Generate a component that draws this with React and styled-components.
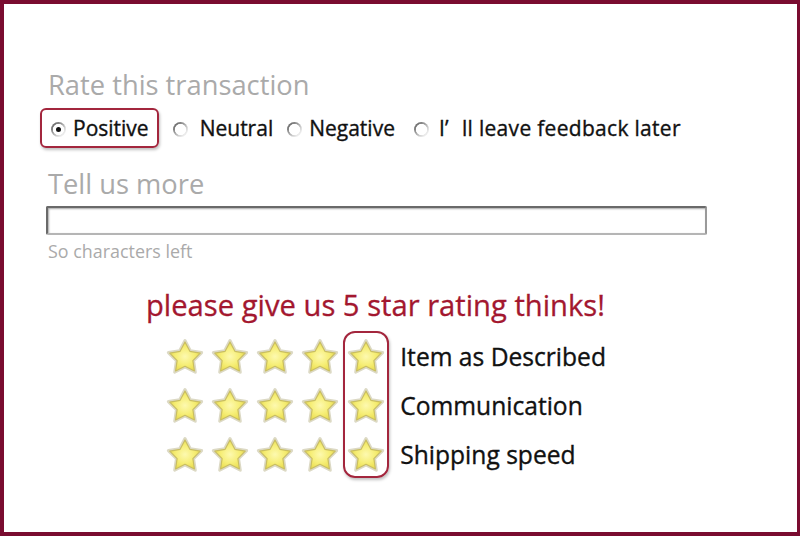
import React from 'react';
import styled, { createGlobalStyle } from 'styled-components';

const GlobalStyle = createGlobalStyle`
    html, body {
        margin: 0;
        padding: 0;
        background: #ffffff;
    }
    * {
        box-sizing: border-box;
    }
`;

const Frame = styled.div`
    width: 800px;
    height: 536px;
    border: 4px solid #7a0c30;
    border-right-width: 3px;
    background: #ffffff;
    padding: 64px 0 0 44px;
    font-family: "Open Sans", "Liberation Sans", sans-serif;
    color: #111;
`;

const SectionTitle = styled.div`
    font-size: 27.3px;
    line-height: 34px;
    color: #aaaaaa;
    margin-top: ${p => p.$top || 0}px;
`;

const RadioRow = styled.div`
    display: flex;
    align-items: center;
    margin-top: 6px;
    margin-left: -8px;
`;

const Option = styled.label`
    display: flex;
    align-items: center;
    height: 40px;
    padding: 0 ${p => p.$highlight ? 8 : 0}px 0 9px;
    margin-right: ${p => p.$gap}px;
    border: 2px solid ${p => p.$highlight ? '#a3263d' : 'transparent'};
    border-radius: 6px;
    box-shadow: ${p => p.$highlight ? '1px 2px 3px rgba(0,0,0,0.25)' : 'none'};
    font-size: 21px;
    color: #111;
    -webkit-text-stroke: 0.35px #111;
    white-space: pre;
`;

const Radio = styled.span`
    flex: none;
    width: 15px;
    height: 15px;
    border-radius: 50%;
    margin-right: ${p => p.$space}px;
    margin-top: 3px;
    background:
        radial-gradient(circle, #ffffff 0 50%, transparent 56%),
        linear-gradient(135deg, #4f4f4f 0%, #9a9a9a 40%, #e2e2e2 72%, #ffffff 100%);
    display: flex;
    align-items: center;
    justify-content: center;

    &::after {
        content: '';
        width: 5px;
        height: 5px;
        border-radius: 50%;
        background: ${p => p.$checked ? '#111' : 'transparent'};
    }
`;

const Apostrophe = styled.span`
    margin-right: 13px;
`;

const TextBox = styled.div`
    width: 661px;
    height: 29px;
    margin: 5px 0 0 -2px;
    border: 2px solid #6a6a6a;
    border-right-color: #9a9a9a;
    border-bottom-color: #b5b5b5;
    border-radius: 2px;
    box-shadow: inset 1px 1px 2px rgba(0,0,0,0.35);
`;

const Hint = styled.div`
    margin: 4px 0 0 0;
    font-size: 17.9px;
    line-height: 24px;
    color: #aaaaaa;
`;

const Slogan = styled.div`
    margin: 24px 0 0 98px;
    font-size: 29.2px;
    line-height: 36px;
    color: #a3172f;
    -webkit-text-stroke: 0.3px #a3172f;
`;

const Ratings = styled.div`
    position: relative;
    display: grid;
    grid-template-columns: repeat(5, 45.25px) auto;
    grid-auto-rows: 49px;
    align-items: center;
    margin: 9px 0 0 114px;
    width: max-content;
`;

const StarCell = styled.div`
    display: flex;
    justify-content: center;
    align-items: center;
`;

const Label = styled.div`
    padding-left: 12px;
    font-size: 24.6px;
    color: #111;
    -webkit-text-stroke: 0.35px #111;
`;

const ColumnMark = styled.div`
    position: absolute;
    left: 181px;
    top: -1px;
    width: 46px;
    height: 147px;
    border: 2px solid #a3263d;
    border-radius: 12px;
    box-shadow: 1px 2px 3px rgba(0,0,0,0.25);
    pointer-events: none;
`;

function starPoints(cx, cy, R, r) {
    const pts = [];
    for (let i = 0; i < 10; i++) {
        const a = (-90 + i * 36) * Math.PI / 180;
        const rad = i % 2 === 0 ? R : r;
        pts.push(`${(cx + rad * Math.cos(a)).toFixed(2)},${(cy + rad * Math.sin(a)).toFixed(2)}`);
    }
    return pts.join(' ');
}

const Star = ({ id }) => (
    <svg width="40" height="40" viewBox="0 0 40 40">
        <defs>
            <radialGradient id={id} cx="50%" cy="50%" r="55%">
                <stop offset="0%" stopColor="#fdf9b0" />
                <stop offset="55%" stopColor="#f6ee76" />
                <stop offset="100%" stopColor="#e9dc4c" />
            </radialGradient>
        </defs>
        <polygon points={starPoints(20, 21, 17.5, 9)} fill="#eceadb" stroke="#dcd9c4" strokeWidth="3" strokeLinejoin="round" />
        <polygon points={starPoints(20, 21, 16, 8.3)} fill={`url(#${id})`} stroke="#c9be62" strokeWidth="1.2" strokeLinejoin="round" />
    </svg>
);

const options = [
    { label: 'Positive', checked: true, gap: 3, space: 7 },
    { label: 'Neutral', gap: 1, space: 12 },
    { label: 'Negative', gap: 6, space: 7 },
    { label: 'later', gap: 0, space: 10 },
];

const rows = ['Item as Described', 'Communication', 'Shipping speed'];

export default () => {
    return (
        <>
            <GlobalStyle />
            <Frame>
                <SectionTitle>Rate this transaction</SectionTitle>
                <RadioRow>
                    {options.map((o, i) => (
                        <Option key={i} $highlight={o.checked} $gap={o.gap}>
                            <Radio $checked={o.checked} $space={o.space} />
                            {o.label === 'later'
                                ? <span style={{ letterSpacing: '0.3px' }}><Apostrophe>I’</Apostrophe>ll leave feedback later</span>
                                : <span>{o.label}</span>}
                        </Option>
                    ))}
                </RadioRow>
                <SectionTitle $top={19}>Tell us more</SectionTitle>
                <TextBox />
                <Hint>So characters left</Hint>
                <Slogan>please give us 5 star rating thinks!</Slogan>
                <Ratings>
                    {rows.map((row, r) => (
                        <React.Fragment key={row}>
                            {[0, 1, 2, 3, 4].map(c => (
                                <StarCell key={c}><Star id={`star-${r}-${c}`} /></StarCell>
                            ))}
                            <Label>{row}</Label>
                        </React.Fragment>
                    ))}
                    <ColumnMark />
                </Ratings>
            </Frame>
        </>
    );
};
